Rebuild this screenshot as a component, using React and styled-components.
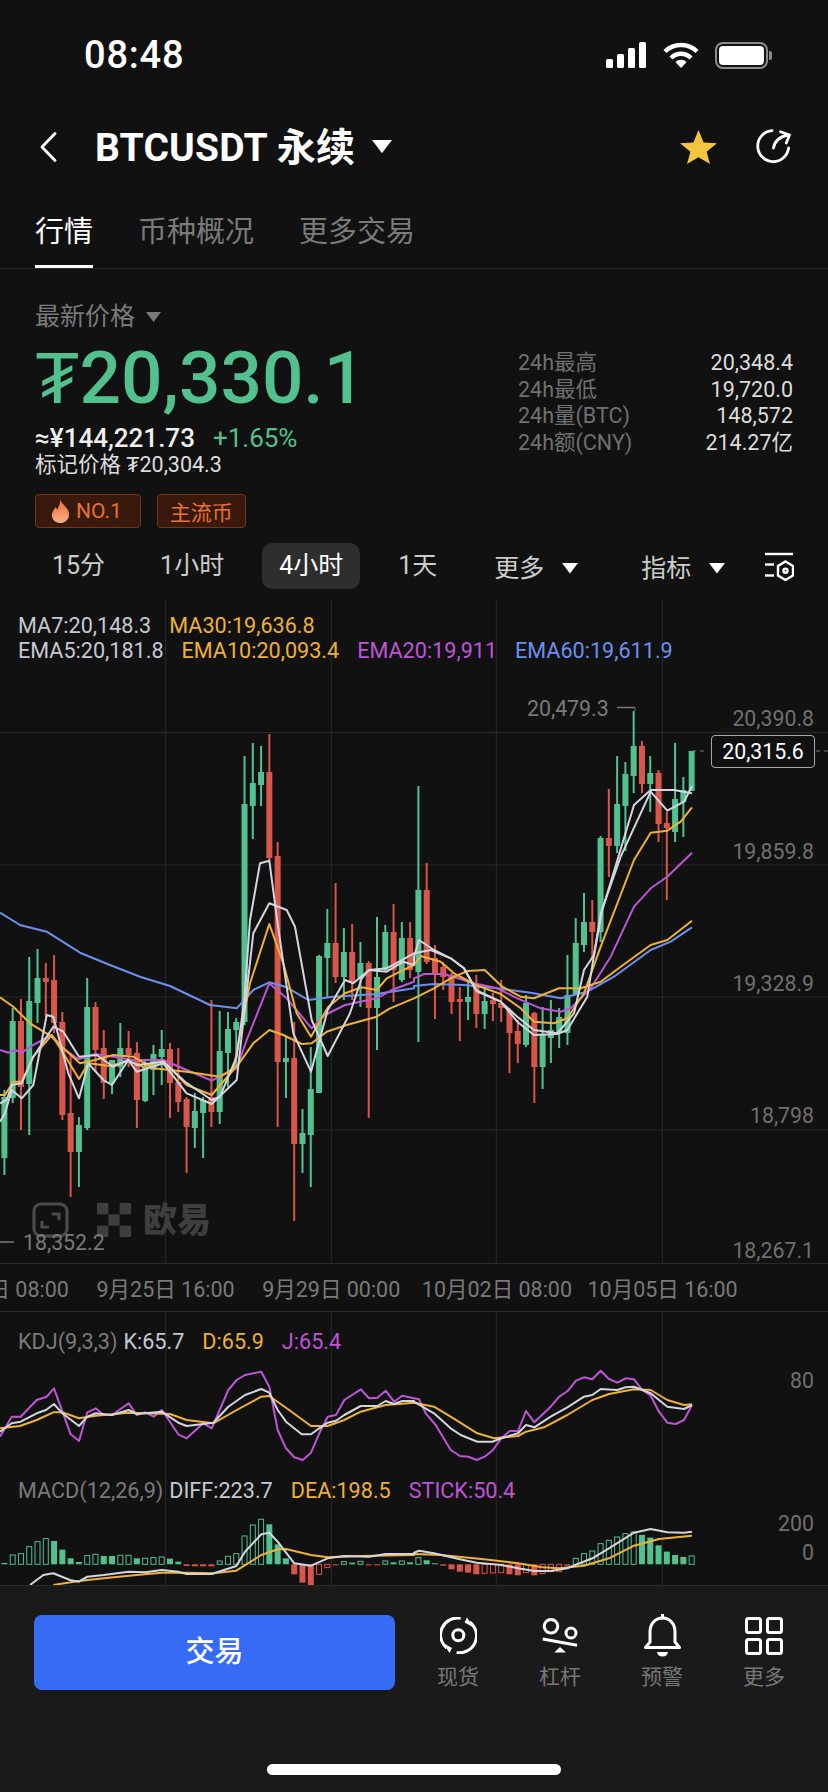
import styled, { createGlobalStyle } from 'styled-components'

const UP = '#52c08f'
const DOWN = '#d9564a'
const WHITE_LINE = '#d3d6de'
const WHITE_TEXT = '#c6c9d2'
const YELLOW = '#eeb136'
const PURPLE = '#bd55d6'
const BLUE = '#6c90ee'
const GRID = '#2a2a2a'

const candleX = i => 4.4 + 8.28 * i

// [up?, wick top, body top, body bottom, wick bottom]
const CANDLES = [
    [1, 1090, 1097, 1158, 1175], [1, 1008, 1021, 1098, 1103], [0, 999, 1021, 1087, 1130], [1, 957, 1001, 1084, 1135],
    [1, 949, 978, 1003, 1023], [0, 963, 978, 982, 1017], [0, 955, 980, 1023, 1033], [0, 1012, 1022, 1115, 1120],
    [0, 1053, 1113, 1152, 1197], [1, 1117, 1125, 1152, 1187], [1, 978, 1007, 1128, 1130], [0, 1002, 1007, 1050, 1072],
    [0, 1030, 1048, 1083, 1099], [1, 1060, 1060, 1083, 1094], [1, 1023, 1048, 1067, 1077], [0, 1031, 1048, 1055, 1067],
    [0, 1042, 1053, 1100, 1128], [1, 1060, 1067, 1101, 1102], [1, 1045, 1054, 1070, 1095], [1, 1030, 1049, 1057, 1085],
    [0, 1043, 1049, 1083, 1118], [0, 1048, 1082, 1102, 1112], [0, 1097, 1099, 1127, 1173], [1, 1093, 1111, 1128, 1148],
    [1, 1097, 1100, 1113, 1158], [0, 1000, 1097, 1112, 1127], [1, 1011, 1051, 1112, 1124], [1, 1012, 1029, 1053, 1087],
    [1, 1018, 1022, 1030, 1067], [1, 756, 804, 1022, 1025], [1, 743, 783, 806, 839], [1, 746, 772, 785, 806],
    [0, 734, 772, 858, 860], [0, 842, 856, 1062, 1127], [1, 1037, 1058, 1062, 1098], [0, 1022, 1058, 1144, 1221],
    [1, 1109, 1133, 1144, 1173], [1, 1047, 1089, 1135, 1187], [1, 955, 956, 1093, 1093], [1, 909, 943, 958, 997],
    [0, 883, 943, 977, 983], [1, 928, 952, 977, 1000], [0, 924, 952, 983, 1000], [1, 942, 963, 978, 1007],
    [0, 961, 963, 1008, 1118], [1, 917, 977, 1008, 1050], [1, 925, 932, 970, 972], [0, 904, 932, 970, 1002],
    [1, 922, 938, 980, 982], [0, 922, 938, 970, 978], [1, 786, 890, 972, 1042], [0, 863, 890, 962, 964],
    [0, 945, 958, 975, 1019], [0, 962, 967, 977, 990], [0, 973, 975, 1002, 1014], [0, 987, 999, 1002, 1041],
    [1, 982, 997, 1002, 1020], [0, 975, 987, 1014, 1028], [1, 988, 1001, 1014, 1029], [0, 993, 1000, 1004, 1021],
    [0, 980, 1003, 1008, 1022], [0, 1008, 1010, 1033, 1073], [0, 1020, 1031, 1044, 1063], [1, 995, 1003, 1045, 1047],
    [0, 1012, 1013, 1067, 1103], [1, 1007, 1035, 1067, 1089], [1, 1000, 1030, 1038, 1063], [1, 1008, 1017, 1033, 1048],
    [1, 955, 995, 1033, 1045], [1, 918, 943, 995, 995], [1, 893, 922, 945, 952], [0, 900, 922, 932, 957],
    [1, 836, 838, 932, 942], [0, 789, 838, 846, 877], [1, 756, 804, 846, 853], [1, 762, 774, 806, 851],
    [1, 711, 746, 776, 793], [0, 741, 746, 784, 793], [1, 756, 773, 784, 812], [0, 770, 773, 824, 842],
    [0, 812, 823, 828, 900], [1, 743, 799, 832, 842], [1, 777, 790, 802, 837], [1, 751, 751, 791, 791],
]

// helpers: points below were read off 3x crops of the chart
const crop = (ox, oy) => pts => pts.map(([x, y]) => `${(ox + x / 3).toFixed(1)},${(oy + y / 3).toFixed(1)}`).join(' ')
const mainL = crop(0, 900)
const mainR = crop(414, 680)
const lowL = crop(0, 1300)
const lowR = crop(414, 1300)

const MAIN_LINES = [
    [BLUE, mainL([[0, 38], [60, 75], [140, 95], [240, 158], [330, 195], [420, 230], [510, 258], [630, 315], [710, 325], [760, 270], [808, 247], [860, 262], [925, 300], [1000, 290], [1130, 282], [1242, 265]]) + ' ' + mainR([[0, 918], [60, 912], [150, 915], [250, 925], [350, 938], [440, 955], [520, 935], [600, 890], [710, 810], [770, 785], [834, 742]])],
    [PURPLE, mainL([[0, 450], [25, 458], [45, 450], [65, 458], [100, 435], [155, 405], [190, 445], [235, 478], [285, 462], [340, 470], [400, 480], [490, 480], [560, 510], [635, 542], [710, 505], [740, 420], [808, 250], [860, 295], [935, 385], [975, 345], [1035, 315], [1130, 295], [1175, 270], [1242, 245]]) + ' ' + mainR([[0, 895], [30, 882], [90, 882], [180, 910], [250, 925], [310, 955], [380, 985], [440, 995], [470, 985], [530, 925], [590, 830], [660, 680], [710, 625], [760, 590], [834, 518]])],
    [YELLOW, mainL([[0, 292], [40, 320], [90, 370], [155, 410], [190, 445], [240, 490], [285, 480], [340, 465], [400, 470], [460, 505], [560, 515], [660, 530], [710, 500], [760, 430], [808, 390], [850, 405], [905, 432], [935, 430], [980, 395], [1040, 375], [1130, 350], [1170, 325], [1242, 295]]) + ' ' + mainR([[0, 955], [60, 925], [110, 895], [160, 873], [212, 870], [265, 920], [320, 950], [360, 955], [435, 925], [500, 925], [560, 905], [620, 860], [710, 795], [760, 780], [834, 722]])],
    [YELLOW, mainL([[0, 585], [15, 585], [40, 545], [65, 545], [100, 470], [155, 405], [190, 460], [237, 537], [265, 490], [330, 498], [385, 483], [430, 500], [490, 483], [560, 555], [635, 585], [700, 510], [750, 250], [808, 72], [850, 190], [890, 340], [933, 410], [985, 320], [1035, 280], [1085, 262], [1130, 270], [1160, 235], [1200, 215], [1242, 195]]) + ' ' + mainR([[0, 855], [20, 828], [80, 845], [120, 880], [185, 915], [260, 942], [320, 985], [360, 1025], [420, 1030], [460, 1015], [510, 940], [560, 800], [660, 540], [710, 458], [760, 452], [800, 425], [834, 382]])],
    [WHITE_LINE, mainL([[0, 665], [15, 640], [35, 570], [65, 595], [100, 555], [140, 345], [160, 350], [205, 520], [237, 595], [265, 490], [310, 540], [336, 555], [385, 480], [410, 515], [490, 490], [560, 580], [635, 612], [710, 540], [760, 100], [808, 10], [860, 30], [885, 80], [935, 360], [983, 468], [1050, 340], [1085, 235], [1107, 210], [1160, 215], [1210, 185], [1242, 195]]) + ' ' + mainR([[0, 830], [15, 780], [60, 810], [110, 835], [150, 865], [185, 930], [260, 965], [310, 1025], [360, 1065], [430, 1062], [460, 1050], [520, 950], [560, 700], [620, 530], [710, 335], [760, 392], [810, 365], [834, 318]])],
    [WHITE_LINE, mainL([[0, 610], [20, 600], [35, 555], [65, 550], [100, 470], [160, 380], [190, 395], [237, 470], [290, 465], [340, 500], [385, 480], [410, 495], [490, 485], [555, 545], [635, 600], [660, 590], [710, 470], [733, 300], [750, 60], [780, -110], [808, -118], [830, 50], [880, 400], [933, 515], [983, 330], [1035, 240], [1060, 250], [1107, 210], [1160, 205], [1242, 160]]) + ' ' + mainR([[0, 820], [50, 810], [110, 835], [150, 865], [190, 935], [260, 965], [310, 1010], [360, 1050], [430, 1060], [480, 1000], [510, 870], [540, 825], [565, 690], [660, 375], [710, 330], [780, 330], [834, 340]])],
]

const KDJ_LINES = [
    [PURPLE, lowL([[0, 410], [35, 350], [62, 350], [110, 300], [140, 290], [162, 265], [212, 403], [237, 423], [262, 337], [287, 325], [311, 345], [336, 345], [386, 310], [410, 345], [436, 337], [461, 350], [486, 330], [535, 403], [560, 415], [610, 370], [635, 385], [685, 270], [710, 240], [735, 225], [784, 215], [808, 260], [833, 390], [858, 445], [883, 472], [908, 480], [933, 458], [958, 400], [983, 350], [1008, 345], [1033, 300], [1082, 268], [1107, 295], [1132, 293], [1157, 272], [1182, 305], [1207, 287], [1242, 295]]) + ' ' + lowR([[0, 295], [15, 298], [35, 340], [65, 375], [110, 450], [138, 468], [163, 470], [188, 480], [212, 470], [237, 450], [262, 415], [287, 393], [312, 393], [336, 333], [361, 367], [410, 320], [436, 290], [461, 273], [486, 242], [510, 232], [535, 238], [560, 212], [585, 237], [610, 248], [635, 235], [660, 238], [685, 270], [710, 287], [735, 335], [760, 368], [785, 372], [810, 360], [834, 315]])],
    [YELLOW, lowL([[0, 385], [60, 378], [110, 360], [160, 337], [187, 337], [237, 355], [287, 347], [386, 338], [510, 342], [560, 360], [640, 370], [710, 330], [784, 290], [808, 288], [860, 325], [933, 378], [983, 378], [1033, 360], [1082, 335], [1132, 322], [1157, 315], [1242, 308]]) + ' ' + lowR([[0, 308], [60, 320], [110, 350], [190, 400], [240, 415], [312, 408], [336, 395], [390, 382], [460, 345], [535, 300], [585, 282], [660, 268], [710, 270], [760, 300], [810, 315], [834, 313]])],
    [WHITE_LINE, lowL([[0, 395], [35, 370], [62, 365], [110, 340], [138, 330], [162, 312], [187, 340], [237, 378], [262, 350], [287, 340], [336, 345], [386, 330], [410, 342], [485, 335], [535, 368], [560, 378], [610, 372], [640, 368], [685, 320], [735, 285], [784, 267], [808, 278], [833, 330], [858, 365], [905, 403], [933, 403], [958, 385], [983, 368], [1008, 362], [1033, 345], [1082, 318], [1132, 318], [1157, 303], [1182, 312], [1207, 303], [1242, 303]]) + ' ' + lowR([[0, 305], [60, 340], [110, 385], [140, 405], [190, 425], [235, 425], [262, 415], [312, 400], [336, 375], [361, 382], [410, 350], [460, 322], [510, 290], [535, 285], [560, 267], [610, 270], [635, 262], [660, 260], [710, 280], [760, 320], [810, 327], [834, 315]])],
]

const MACD_LINES = [
    [YELLOW, lowL([[160, 855], [237, 843], [311, 835], [410, 825], [485, 818], [560, 818], [640, 820], [709, 812], [784, 765], [833, 748], [858, 747], [933, 765], [983, 772], [1082, 768], [1242, 765]]) + ' ' + lowR([[0, 762], [80, 765], [210, 778], [312, 790], [385, 802], [436, 805], [510, 797], [585, 775], [660, 737], [735, 717], [834, 707]])],
    [WHITE_LINE, lowL([[90, 855], [130, 825], [160, 820], [210, 840], [237, 845], [262, 830], [311, 825], [386, 815], [436, 817], [485, 810], [535, 815], [560, 822], [635, 822], [709, 798], [735, 755], [784, 703], [808, 698], [833, 725], [883, 790], [933, 797], [983, 775], [1033, 768], [1107, 770], [1157, 762], [1242, 762]]) + ' ' + lowR([[0, 758], [15, 752], [60, 760], [138, 778], [188, 788], [262, 795], [312, 805], [361, 813], [410, 813], [460, 805], [535, 775], [585, 745], [660, 698], [710, 687], [760, 697], [810, 698], [834, 695]])],
]

// height in crop pixels above (+) or below (-) the zero line, h = hollow
const STICKS = [
    4, '28h', '32h', '53h', '68h', '77h', 70, 44, 18, 7, '26h', '30h', 25, 25, '27h', '27h', 18, '18h', '20h', '22h', 17, 8,
    -5, -6, -6, -6, '10h', '24h', '32h', '85h', '118h', '135h', 120, 60, 18, -30, -55, -62, '-30h', '-10h', -3,
    '8h', 5, '9h', -3, -3, '10h', 6, '10h', 6, '20h', 12, 3, -4, -15, -22, -25, -30, '-27h', '-26h', '-25h', -30, -33, '-25h', -33, '-28h', '-22h', '-22h', -4,
    '18h', '32h', '40h', '62h', '72h', '82h', '92h', '97h', 88, 80, 57, 38, 28, 22, '25h',
]

const GridLines = ({ rows, top, bottom }) => (
    <>
        {[165.7, 331.3, 496.3, 662.3].map(x => <line key={x} x1={x} x2={x} y1={top} y2={bottom} stroke={GRID} strokeWidth="1" />)}
        {rows.map(y => <line key={y} x1="0" x2="828" y1={y} y2={y} stroke={GRID} strokeWidth="1" />)}
    </>
)

const Lines = ({ items }) => items.map(([color, points], i) => (
    <polyline key={i} points={points} fill="none" stroke={color} strokeWidth="2" strokeLinejoin="round" />
))

const MainChart = () => (
    <PanelSvg viewBox="0 600 828 663">
        <GridLines rows={[732.5, 865, 997, 1130]} top={600} bottom={1263} />
        {CANDLES.map(([up, wickTop, top, bottom, wickBottom], i) => {
            const x = candleX(i)
            const color = up ? UP : DOWN
            return (
                <g key={i} fill={color}>
                    <rect x={x - 1} y={wickTop} width="2" height={wickBottom - wickTop} />
                    <rect x={x - 3} y={top} width="6" height={Math.max(bottom - top, 1.5)} />
                </g>
            )
        })}
        <Lines items={MAIN_LINES} />
        <line x1="692" x2="704" y1="751" y2="751" stroke="#777" strokeDasharray="4 4" />
        <line x1="816" x2="828" y1="751" y2="751" stroke="#777" strokeDasharray="4 4" />
        <line x1="617" x2="635" y1="707.5" y2="707.5" stroke="#7a7a7a" strokeWidth="1.5" />
        <line x1="635" x2="635" y1="707.5" y2="711" stroke="#7a7a7a" strokeWidth="1" />
        <line x1="0" x2="14" y1="1242" y2="1242" stroke="#7a7a7a" strokeWidth="1.5" />
    </PanelSvg>
)

const KdjChart = () => (
    <PanelSvg viewBox="0 1312 828 150">
        <GridLines rows={[]} top={1312} bottom={1462} />
        <Lines items={KDJ_LINES} />
    </PanelSvg>
)

const MacdChart = () => (
    <PanelSvg viewBox="0 1462 828 123">
        <GridLines rows={[]} top={1462} bottom={1585} />
        {STICKS.map((stick, i) => {
            const hollow = typeof stick === 'string'
            const value = parseFloat(stick) / 3
            const color = value > 0 ? UP : DOWN
            const zero = 1564.3
            const y = value > 0 ? zero - value : zero
            const h = Math.abs(value)
            return hollow
                ? <rect key={i} x={candleX(i) - 2.5} y={y} width="5" height={h} fill="none" stroke={color} strokeWidth="1" />
                : <rect key={i} x={candleX(i) - 3} y={y} width="6" height={h} fill={color} />
        })}
        <Lines items={MACD_LINES} />
    </PanelSvg>
)

const BackIcon = () => (
    <svg width="17" height="30" viewBox="0 0 17 30" fill="none" stroke="#fff" strokeWidth="2.8" strokeLinecap="round" strokeLinejoin="round">
        <path d="M15 1.5 L2 15 L15 28.5" />
    </svg>
)

const Caret = ({ size = 20, color = '#fff' }) => (
    <CaretSvg width={size} height={size * 0.66} viewBox="0 0 20 13.2"><path d="M0 0 H20 L10 13.2 Z" fill={color} /></CaretSvg>
)

const StarIcon = () => (
    <svg width="37" height="34" viewBox="0 0 37 34"><path d="M18.5 0 L23.6 12.4 L37 13.3 L26.6 21.7 L30 34 L18.5 27.2 L7 34 L10.4 21.7 L0 13.3 L13.4 12.4 Z" fill="#f5c53f" /></svg>
)

const HistoryIcon = () => (
    <svg width="35" height="35" viewBox="0 0 35 35" fill="none" stroke="#fff" strokeWidth="2.8" strokeLinecap="round" strokeLinejoin="round">
        <path d="M16 1.6 A15.5 15.5 0 1 0 32.6 19" />
        <path d="M17.5 19 C18 13 24 7 32 6" />
        <path d="M24.5 2.7 L33.5 6 L30.3 14" />
    </svg>
)

const SignalIcon = () => (
    <svg width="41" height="26" viewBox="0 0 41 26" fill="#fff">
        <rect x="0" y="17" width="7" height="9" rx="1.5" />
        <rect x="11" y="12" width="7" height="14" rx="1.5" />
        <rect x="22" y="6" width="7" height="20" rx="1.5" />
        <rect x="33" y="0" width="7" height="26" rx="1.5" />
    </svg>
)

const WifiIcon = () => (
    <svg width="36" height="26" viewBox="0 0 36 26" fill="none" stroke="#fff" strokeWidth="4.4">
        <path d="M2 9.5 A23 23 0 0 1 34 9.5" />
        <path d="M8 16 A14 14 0 0 1 28 16" />
        <path d="M18 26 L12.4 20 A8 8 0 0 1 23.6 20 Z" fill="#fff" stroke="none" />
    </svg>
)

const FlameIcon = () => (
    <svg width="19" height="24" viewBox="0 0 19 24">
        <defs>
            <linearGradient id="flame" x1="0" x2="0" y1="0" y2="1">
                <stop offset="0" stopColor="#e86a32" />
                <stop offset="1" stopColor="#f6b08c" />
            </linearGradient>
        </defs>
        <path d="M9 0 C10 5 17.5 8 18 15 C18.4 20.5 14 24 9.5 24 C4.5 24 .6 20.5 1 15.5 C1.3 12 3.5 10.5 4.5 8 C5.5 9 6 10 6 11 C8 8 9.5 4 9 0 Z" fill="url(#flame)" />
    </svg>
)

const SettingsIcon = () => (
    <svg width="29" height="29" viewBox="0 0 29 29" fill="none" stroke="#fff" strokeWidth="2.4">
        <path d="M0 2 H28" />
        <path d="M0 12.5 H9" />
        <path d="M0 23.5 H9" />
        <path d="M20.5 9.5 L28 14 V23.5 L20.5 28 L13 23.5 V14 Z" />
        <circle cx="20.5" cy="18.8" r="2" />
    </svg>
)

const SpotIcon = () => (
    <svg width="37" height="37" viewBox="0 0 37 37" fill="none" stroke="#fff" strokeWidth="3">
        <path d="M20.6 1.2 A17 17 0 0 0 6.7 31" />
        <path d="M29.5 5 A17 17 0 0 1 16.6 35.5" />
        <path d="M3 26 L12 31 L9.5 36 Z" fill="#fff" stroke="none" />
        <path d="M33.6 10.6 L24.6 5.6 L27 .6 Z" fill="#fff" stroke="none" />
        <circle cx="18.3" cy="18.3" r="5.5" />
    </svg>
)

const MarginIcon = () => (
    <svg width="36" height="36" viewBox="0 0 36 36" fill="none" stroke="#fff" strokeWidth="3">
        <circle cx="9" cy="8.3" r="6.8" />
        <circle cx="29" cy="15" r="5" />
        <path d="M.7 21 L35 27.3" />
        <path d="M18 29 L24 34.4 H12.3 Z" fill="#fff" stroke="none" />
    </svg>
)

const BellIcon = () => (
    <svg width="37" height="43" viewBox="0 0 37 43" fill="none" stroke="#fff" strokeWidth="3" strokeLinejoin="round">
        <path d="M18.5 4 C10.5 4 6 10.5 6 18 V28 L1.5 33.5 H35.5 L31 28 V18 C31 10.5 26.5 4 18.5 4 Z" />
        <path d="M18.5 1 V4" strokeLinecap="round" />
        <path d="M13 38 H24 C23.5 41 21.5 42.5 18.5 42.5 C15.5 42.5 13.5 41 13 38 Z" fill="#fff" stroke="none" />
    </svg>
)

const GridIcon = () => (
    <svg width="38" height="38" viewBox="0 0 38 38" fill="none" stroke="#fff" strokeWidth="3">
        <rect x="1.5" y="1.5" width="14" height="14" rx="2" />
        <rect x="22.5" y="1.5" width="14" height="14" rx="2" />
        <rect x="1.5" y="22.5" width="14" height="14" rx="2" />
        <rect x="22.5" y="22.5" width="14" height="14" rx="2" />
    </svg>
)

const Watermark = () => (
    <Mark>
        <svg width="38" height="36" viewBox="0 0 38 36" fill="none" stroke="#4a4a4a" strokeWidth="3.2" strokeLinecap="round">
            <rect x="2" y="2" width="33" height="32" rx="7" />
            <path d="M21 12 H27 V17" />
            <path d="M10 20 V25 H16" />
        </svg>
        <svg width="34" height="34" viewBox="0 0 3 3" fill="#3e3e3e">
            <rect x="0" y="0" width="1" height="1" />
            <rect x="2" y="0" width="1" height="1" />
            <rect x="1" y="1" width="1" height="1" />
            <rect x="0" y="2" width="1" height="1" />
            <rect x="2" y="2" width="1" height="1" />
        </svg>
        <MarkText>欧易</MarkText>
    </Mark>
)

const TIMES = ['9月22日 08:00', '9月25日 16:00', '9月29日 00:00', '10月02日 08:00', '10月05日 16:00']
const FRAMES = ['15分', '1小时', '4小时', '1天']
const STATS = [
    ['24h最高', '20,348.4'],
    ['24h最低', '19,720.0'],
    ['24h量(BTC)', '148,572'],
    ['24h额(CNY)', '214.27亿'],
]
const ACTIONS = [
    [SpotIcon, '现货'],
    [MarginIcon, '杠杆'],
    [BellIcon, '预警'],
    [GridIcon, '更多'],
]

const App = () => (
    <Screen>
        <GlobalStyle />
        <StatusBar>
            <Clock>08:48</Clock>
            <StatusIcons>
                <SignalIcon />
                <WifiIcon />
                <Battery><BatteryFill /></Battery>
            </StatusIcons>
        </StatusBar>

        <Header>
            <BackIcon />
            <Title>BTCUSDT 永续</Title>
            <Caret />
            <HeaderActions>
                <StarIcon />
                <HistoryIcon />
            </HeaderActions>
        </Header>

        <Tabs>
            <Tab $active>行情</Tab>
            <Tab>币种概况</Tab>
            <Tab>更多交易</Tab>
        </Tabs>

        <Summary>
            <div>
                <PriceLabel>最新价格<Caret size={15} color="#7a7a7a" /></PriceLabel>
                <Price>₮20,330.1</Price>
                <SubPrice>≈¥144,221.73<Change>+1.65%</Change></SubPrice>
                <MarkPrice>标记价格 ₮20,304.3</MarkPrice>
                <TagRow>
                    <RankTag><FlameIcon />NO.1</RankTag>
                    <Tag>主流币</Tag>
                </TagRow>
            </div>
            <Stats>
                {STATS.map(([label, value]) => (
                    <StatRow key={label}>
                        <StatLabel>{label}</StatLabel>
                        <span>{value}</span>
                    </StatRow>
                ))}
            </Stats>
        </Summary>

        <Frames>
            {FRAMES.map(f => <Frame key={f} $active={f === '4小时'}>{f}</Frame>)}
            <FrameMenu $gap="23px">更多<Caret size={16} /></FrameMenu>
            <FrameMenu $gap="0">指标<Caret size={16} /></FrameMenu>
            <SettingsSlot><SettingsIcon /></SettingsSlot>
        </Frames>

        <ChartPanel $height="663px">
            <MainChart />
            <Legend>
                <LegendRow>
                    <LegendItem $color={WHITE_TEXT}>MA7:20,148.3</LegendItem>
                    <LegendItem $color={YELLOW}>MA30:19,636.8</LegendItem>
                </LegendRow>
                <LegendRow>
                    <LegendItem $color={WHITE_TEXT}>EMA5:20,181.8</LegendItem>
                    <LegendItem $color={YELLOW}>EMA10:20,093.4</LegendItem>
                    <LegendItem $color={PURPLE}>EMA20:19,911</LegendItem>
                    <LegendItem $color={BLUE}>EMA60:19,611.9</LegendItem>
                </LegendRow>
            </Legend>
            <AxisLabel $y={118}>20,390.8</AxisLabel>
            <AxisLabel $y={251}>19,859.8</AxisLabel>
            <AxisLabel $y={383}>19,328.9</AxisLabel>
            <AxisLabel $y={515}>18,798</AxisLabel>
            <AxisLabel $y={650}>18,267.1</AxisLabel>
            <LastPrice>20,315.6</LastPrice>
            <HighLabel>20,479.3</HighLabel>
            <Watermark />
            <LowLabel>18,352.2</LowLabel>
        </ChartPanel>

        <TimeAxis>
            {TIMES.map(t => <TimeTick key={t}>{t}</TimeTick>)}
        </TimeAxis>

        <ChartPanel $height="150px">
            <KdjChart />
            <Legend $top="17px">
                <LegendRow $gap="6px">
                    <LegendItem $color="#7a7a7a">KDJ(9,3,3)</LegendItem>
                    <LegendItem $color={WHITE_TEXT}>K:65.7</LegendItem>
                    <LegendItem $color={YELLOW} $left="12px">D:65.9</LegendItem>
                    <LegendItem $color={PURPLE} $left="12px">J:65.4</LegendItem>
                </LegendRow>
            </Legend>
            <AxisLabel $y={68}>80</AxisLabel>
        </ChartPanel>

        <ChartPanel $height="123px">
            <MacdChart />
            <Legend $top="16px">
                <LegendRow $gap="6px">
                    <LegendItem $color="#7a7a7a">MACD(12,26,9)</LegendItem>
                    <LegendItem $color={WHITE_TEXT}>DIFF:223.7</LegendItem>
                    <LegendItem $color={YELLOW} $left="12px">DEA:198.5</LegendItem>
                    <LegendItem $color={PURPLE} $left="12px">STICK:50.4</LegendItem>
                </LegendRow>
            </Legend>
            <AxisLabel $y={61}>200</AxisLabel>
            <AxisLabel $y={90}>0</AxisLabel>
        </ChartPanel>

        <Footer>
            <TradeButton>交易</TradeButton>
            <Actions>
                {ACTIONS.map(([Icon, label]) => (
                    <Action key={label}>
                        <ActionIcon><Icon /></ActionIcon>
                        <ActionLabel>{label}</ActionLabel>
                    </Action>
                ))}
            </Actions>
            <HomeBar />
        </Footer>
    </Screen>
)

const GlobalStyle = createGlobalStyle`
    html, body {
        margin: 0;
        background: #111;
    }
`

const Screen = styled.div`
    width: 828px;
    height: 1792px;
    overflow: hidden;
    background: #111;
    color: #fff;
    font-family: Roboto, "Noto Sans CJK SC", sans-serif;
`

const CaretSvg = styled.svg`
    flex: none;
    display: block;
`

const StatusBar = styled.div`
    height: 100px;
    padding: 10px 60px 0 84px;
    box-sizing: border-box;
    display: flex;
    justify-content: space-between;
    align-items: center;
`

const Clock = styled.div`
    font-size: 38px;
    font-weight: 500;
    letter-spacing: 0.8px;
`

const StatusIcons = styled.div`
    display: flex;
    align-items: center;
    gap: 16px;
`

const Battery = styled.div`
    width: 53px;
    height: 27px;
    box-sizing: border-box;
    border: 2px solid #8c8c8c;
    border-radius: 8px;
    padding: 2px;
    position: relative;
    &::after {
        content: '';
        position: absolute;
        right: -6px;
        top: 7px;
        width: 3px;
        height: 9px;
        border-radius: 0 2px 2px 0;
        background: #8c8c8c;
    }
`

const BatteryFill = styled.div`
    height: 100%;
    background: #fff;
    border-radius: 4px;
`

const Header = styled.div`
    height: 90px;
    box-sizing: border-box;
    padding: 3px 37px 0 40px;
    display: flex;
    align-items: center;
`

const Title = styled.div`
    margin: -5px 17px 0 38px;
    font-size: 39px;
    font-weight: 700;
    letter-spacing: 0.2px;
    white-space: nowrap;
`

const HeaderActions = styled.div`
    margin-left: auto;
    display: flex;
    align-items: center;
    gap: 39px;
`

const Tabs = styled.div`
    height: 79px;
    box-sizing: border-box;
    padding: 0 35px;
    display: flex;
    gap: 45px;
    border-bottom: 1px solid ${GRID};
`

const Tab = styled.div`
    height: 78px;
    box-sizing: border-box;
    padding-top: 2px;
    display: flex;
    align-items: center;
    font-size: 29px;
    color: ${p => (p.$active ? '#fff' : '#7a7a7a')};
    border-bottom: 3px solid ${p => (p.$active ? '#fff' : 'transparent')};
`

const Summary = styled.div`
    padding: 32px 35px 0;
    display: flex;
    justify-content: space-between;
`

const PriceLabel = styled.div`
    height: 32px;
    line-height: 32px;
    font-size: 25px;
    color: #7a7a7a;
    display: flex;
    align-items: center;
    gap: 11px;
`

const Price = styled.div`
    margin-top: 5px;
    height: 80px;
    line-height: 80px;
    font-size: 73px;
    font-weight: 500;
    color: ${UP};
    white-space: nowrap;
`

const SubPrice = styled.div`
    margin-top: 6px;
    height: 28px;
    line-height: 28px;
    font-size: 26px;
    font-weight: 500;
    color: #eee;
`

const Change = styled.span`
    margin-left: 18px;
    color: ${UP};
    font-weight: 400;
`

const MarkPrice = styled.div`
    margin-top: -1px;
    height: 28px;
    line-height: 28px;
    font-size: 21.5px;
    color: #ddd;
`

const TagRow = styled.div`
    margin-top: 15px;
    display: flex;
    gap: 16px;
`

const Tag = styled.div`
    height: 34px;
    padding: 0 12px;
    box-sizing: border-box;
    display: flex;
    align-items: center;
    gap: 6px;
    font-size: 21px;
    color: #e9722e;
    background: #38190b;
    border: 1px solid #763616;
    border-radius: 4px;
`

const RankTag = styled(Tag)`
    padding: 0 18px 0 15px;
`

const Stats = styled.div`
    width: 275px;
    margin-top: 49px;
    font-size: 21.5px;
    color: #ddd;
`

const StatRow = styled.div`
    height: 26.6px;
    line-height: 26.6px;
    display: flex;
    justify-content: space-between;
`

const StatLabel = styled.span`
    color: #707070;
`

const Frames = styled.div`
    margin-top: 15px;
    margin-bottom: 11px;
    height: 46px;
    padding: 0 34px 0 35px;
    display: flex;
    align-items: center;
    gap: 21px;
`

const Frame = styled.div`
    height: 46px;
    line-height: 46px;
    padding: 0 17px;
    font-size: 25px;
    white-space: nowrap;
    color: ${p => (p.$active ? '#fff' : '#ccc')};
    background: ${p => (p.$active ? '#2e2e2e' : 'transparent')};
    border-radius: 10px;
`

const FrameMenu = styled.div`
    display: flex;
    align-items: center;
    gap: 18px;
    margin-left: 19px;
    margin-right: ${p => p.$gap};
    font-size: 25px;
    white-space: nowrap;
    color: #ccc;
    svg {
        margin-top: 5px;
    }
`

const SettingsSlot = styled.div`
    margin-left: auto;
    display: flex;
`

const ChartPanel = styled.div`
    position: relative;
    height: ${p => p.$height};
    overflow: hidden;
`

const PanelSvg = styled.svg`
    position: absolute;
    inset: 0;
    width: 100%;
    height: 100%;
`

const Legend = styled.div`
    position: relative;
    padding: ${p => p.$top || '13px'} 0 0 18px;
    font-size: 21.6px;
    line-height: 25px;
`

const LegendRow = styled.div`
    display: flex;
    gap: ${p => p.$gap || '18px'};
`

const LegendItem = styled.span`
    color: ${p => p.$color};
    margin-left: ${p => p.$left || 0};
`

const AxisLabel = styled.div`
    position: absolute;
    right: 14px;
    top: ${p => p.$y}px;
    transform: translateY(-50%);
    font-size: 21.3px;
    color: #707070;
`

const LastPrice = styled.div`
    position: absolute;
    left: 711px;
    top: 135px;
    width: 104px;
    height: 33px;
    box-sizing: border-box;
    border: 1px solid #a8a8a8;
    border-radius: 4px;
    background: #111;
    text-align: center;
    line-height: 31px;
    font-size: 21.3px;
    color: #fff;
`

const HighLabel = styled.div`
    position: absolute;
    left: 527px;
    top: 108px;
    transform: translateY(-50%);
    font-size: 21.3px;
    color: #7a7a7a;
`

const LowLabel = styled.div`
    position: absolute;
    left: 23px;
    top: 642px;
    transform: translateY(-50%);
    font-size: 21.3px;
    color: #7a7a7a;
`

const Mark = styled.div`
    position: absolute;
    left: 32px;
    top: 602px;
    display: flex;
    align-items: center;
    gap: 27px;
`

const MarkText = styled.div`
    margin-left: -15px;
    font-size: 34px;
    line-height: 34px;
    font-weight: 900;
    color: #3e3e3e;
`

const TimeAxis = styled.div`
    height: 49px;
    box-sizing: border-box;
    margin-left: -83px;
    width: 911px;
    display: flex;
    align-items: center;
    border-top: 1px solid ${GRID};
    border-bottom: 1px solid ${GRID};
    background: #111;
`

const TimeTick = styled.div`
    flex: 0 0 165.7px;
    text-align: center;
    font-size: 21.5px;
    color: #7a7a7a;
    white-space: nowrap;
`

const Footer = styled.div`
    position: relative;
    height: 207px;
    box-sizing: border-box;
    padding: 29px 0 0 34px;
    display: flex;
    background: #1a1a1a;
    border-top: 1px solid ${GRID};
`

const TradeButton = styled.div`
    width: 361px;
    height: 75px;
    line-height: 75px;
    text-align: center;
    font-size: 29px;
    font-weight: 500;
    color: #fff;
    background: #366cf5;
    border-radius: 8px;
`

const Actions = styled.div`
    margin-left: 12px;
    display: flex;
`

const Action = styled.div`
    width: 102px;
    display: flex;
    flex-direction: column;
    align-items: center;
`

const ActionIcon = styled.div`
    height: 41px;
    display: flex;
    align-items: center;
    justify-content: center;
`

const ActionLabel = styled.div`
    margin-top: 8px;
    line-height: 26px;
    font-size: 21px;
    color: #777;
`

const HomeBar = styled.div`
    position: absolute;
    left: 267px;
    bottom: 17px;
    width: 294px;
    height: 11px;
    border-radius: 6px;
    background: #fff;
`

export default App
